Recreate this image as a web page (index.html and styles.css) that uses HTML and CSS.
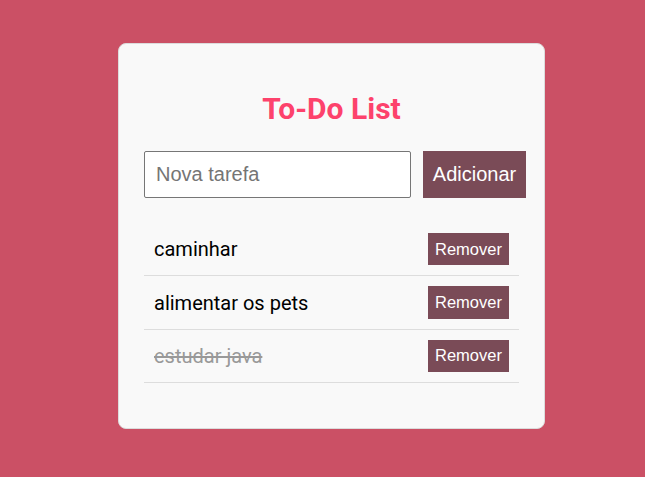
FILE: index.html
```html
<!DOCTYPE html>
<html lang="pt">
<head>
<meta charset="utf-8">
<title>To-Do List</title>
<link rel="stylesheet" href="styles.css">
</head>
<body>
<div class="card">
  <h1 class="title">To-Do List</h1>
  <div class="form">
    <input class="task-input" type="text" placeholder="Nova tarefa">
    <button class="add-btn">Adicionar</button>
  </div>
  <ul class="list">
    <li class="item"><span class="item-text">caminhar</span><button class="remove-btn">Remover</button></li>
    <li class="item"><span class="item-text">alimentar os pets</span><button class="remove-btn">Remover</button></li>
    <li class="item done"><span class="item-text">estudar java</span><button class="remove-btn">Remover</button></li>
  </ul>
</div>
</body>
</html>
```
FILE: styles.css
```css
html, body {
  margin: 0;
  padding: 0;
}
body {
  background: #cb5065;
  font-family: Roboto, "Liberation Sans", sans-serif;
  height: 477px;
  padding-top: 43px;
  box-sizing: border-box;
}
.card {
  width: 427px;
  box-sizing: border-box;
  margin: 0 0 0 118px;
  background: #f9f9f9;
  border: 1px solid #dcdcdc;
  border-radius: 8px;
  padding: 25px 25px 45px;
}
.title {
  margin: 22px 0 24px;
  text-align: center;
  font-size: 30px;
  font-weight: 700;
  color: #fd426c;
  line-height: 36px;
}
.form {
  display: flex;
  gap: 12px;
  margin-bottom: 25px;
}
.task-input {
  flex: 0 0 auto;
  width: 267px;
  height: 47px;
  box-sizing: border-box;
  border: 1px solid #767676;
  border-radius: 2px;
  padding: 0 11px;
  font-family: "Liberation Sans", Arial, sans-serif;
  font-size: 20px;
  background: #fff;
  margin: 0;
}
.task-input::placeholder {
  color: #757575;
}
.add-btn {
  flex: 0 0 auto;
  width: 103px;
  height: 47px;
  border: none;
  background: #7a4b57;
  color: #fff;
  font-family: "Liberation Sans", Arial, sans-serif;
  font-size: 20px;
  padding: 0;
  margin: 0;
}
.list {
  list-style: none;
  margin: 0;
  padding: 0;
}
.item {
  display: flex;
  align-items: center;
  justify-content: space-between;
  padding: 10px;
  border-bottom: 1px solid #dddddd;
}
.item-text {
  font-size: 20px;
  color: #000;
}
.done .item-text {
  color: #999;
  text-decoration: line-through;
}
.remove-btn {
  width: 81px;
  height: 32.4px;
  border: none;
  background: #7a4b57;
  color: #fff;
  font-family: "Liberation Sans", Arial, sans-serif;
  font-size: 16.5px;
  padding: 0;
  margin: 0;
}
```
